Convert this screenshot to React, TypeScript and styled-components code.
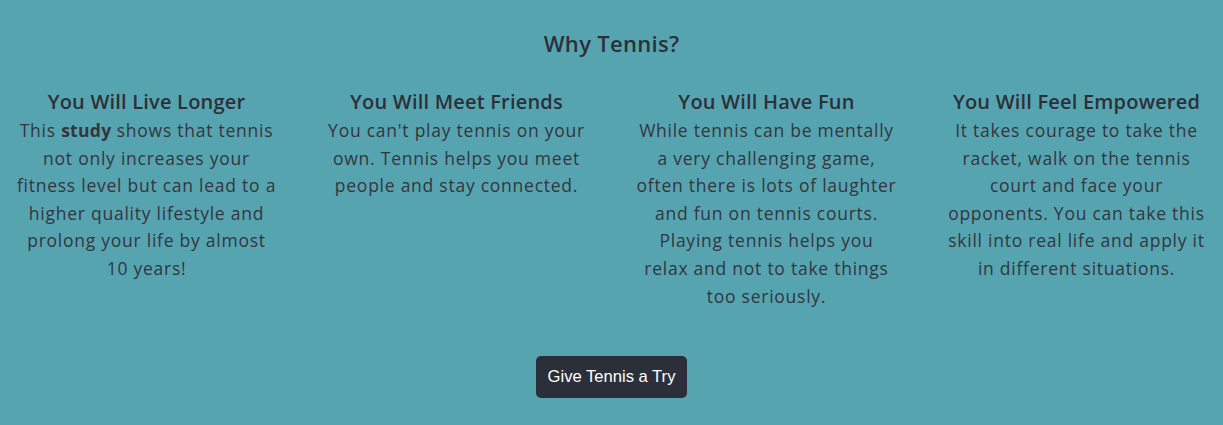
import React from "react";
import styled, { createGlobalStyle } from "styled-components";

const Global = createGlobalStyle`
  html, body { margin: 0; padding: 0; background: #57a4b1; }
  body { font-family: "Open Sans", "Noto Sans", sans-serif; color: #2c3038; }
`;

const Section = styled.section`
  background: #57a4b1;
  min-height: 425px;
  padding-top: 27px;
  box-sizing: border-box;
  display: flex;
  flex-direction: column;
  align-items: center;
`;

const Title = styled.h2`
  margin: 0;
  font-family: "Open Sans", sans-serif;
  font-weight: 600;
  font-size: 22px;
  letter-spacing: 0.3px;
  line-height: 32px;
  color: #2c3038;
`;

const Grid = styled.div`
  display: grid;
  grid-template-columns: repeat(4, 290px);
  column-gap: 20px;
  margin-top: 28px;
`;

const Card = styled.div`
  text-align: center;
`;

const CardTitle = styled.h3`
  margin: 0;
  font-family: "Open Sans", sans-serif;
  font-weight: 600;
  font-size: 20px;
  letter-spacing: 0.2px;
  line-height: 30px;
  color: #2c3038;
`;

const CardText = styled.p`
  margin: 0;
  font-size: 17.5px;
  letter-spacing: 0.75px;
  line-height: 27.6px;
  color: #33363d;
  b { font-weight: 700; letter-spacing: 0.3px; }
`;

const Line = styled.span`
  display: block;
  white-space: nowrap;
`;

const Button = styled.button`
  margin-top: 46px;
  height: 42px;
  background: #2b2f3a;
  color: #fff;
  border: none;
  border-radius: 5px;
  font-family: "Liberation Sans", Arial, sans-serif;
  font-size: 16.6px;
  line-height: 24px;
  padding: 0 12px;
  cursor: pointer;
`;

const items: { title: string; lines: React.ReactNode[] }[] = [
  {
    title: "You Will Live Longer",
    lines: [
      <>This <b>study</b> shows that tennis</>,
      "not only increases your",
      "fitness level but can lead to a",
      "higher quality lifestyle and",
      "prolong your life by almost",
      "10 years!",
    ],
  },
  {
    title: "You Will Meet Friends",
    lines: ["You can't play tennis on your", "own. Tennis helps you meet", "people and stay connected."],
  },
  {
    title: "You Will Have Fun",
    lines: [
      "While tennis can be mentally",
      "a very challenging game,",
      "often there is lots of laughter",
      "and fun on tennis courts.",
      "Playing tennis helps you",
      "relax and not to take things",
      "too seriously.",
    ],
  },
  {
    title: "You Will Feel Empowered",
    lines: [
      "It takes courage to take the",
      "racket, walk on the tennis",
      "court and face your",
      "opponents. You can take this",
      "skill into real life and apply it",
      "in different situations.",
    ],
  },
];

export default function App() {
  return (
    <>
      <Global />
      <Section>
        <Title>Why Tennis?</Title>
        <Grid>
          {items.map((it) => (
            <Card key={it.title}>
              <CardTitle>{it.title}</CardTitle>
              <CardText>
                {it.lines.map((l, i) => (
                  <Line key={i}>{l}</Line>
                ))}
              </CardText>
            </Card>
          ))}
        </Grid>
        <Button>Give Tennis a Try</Button>
      </Section>
    </>
  );
}
